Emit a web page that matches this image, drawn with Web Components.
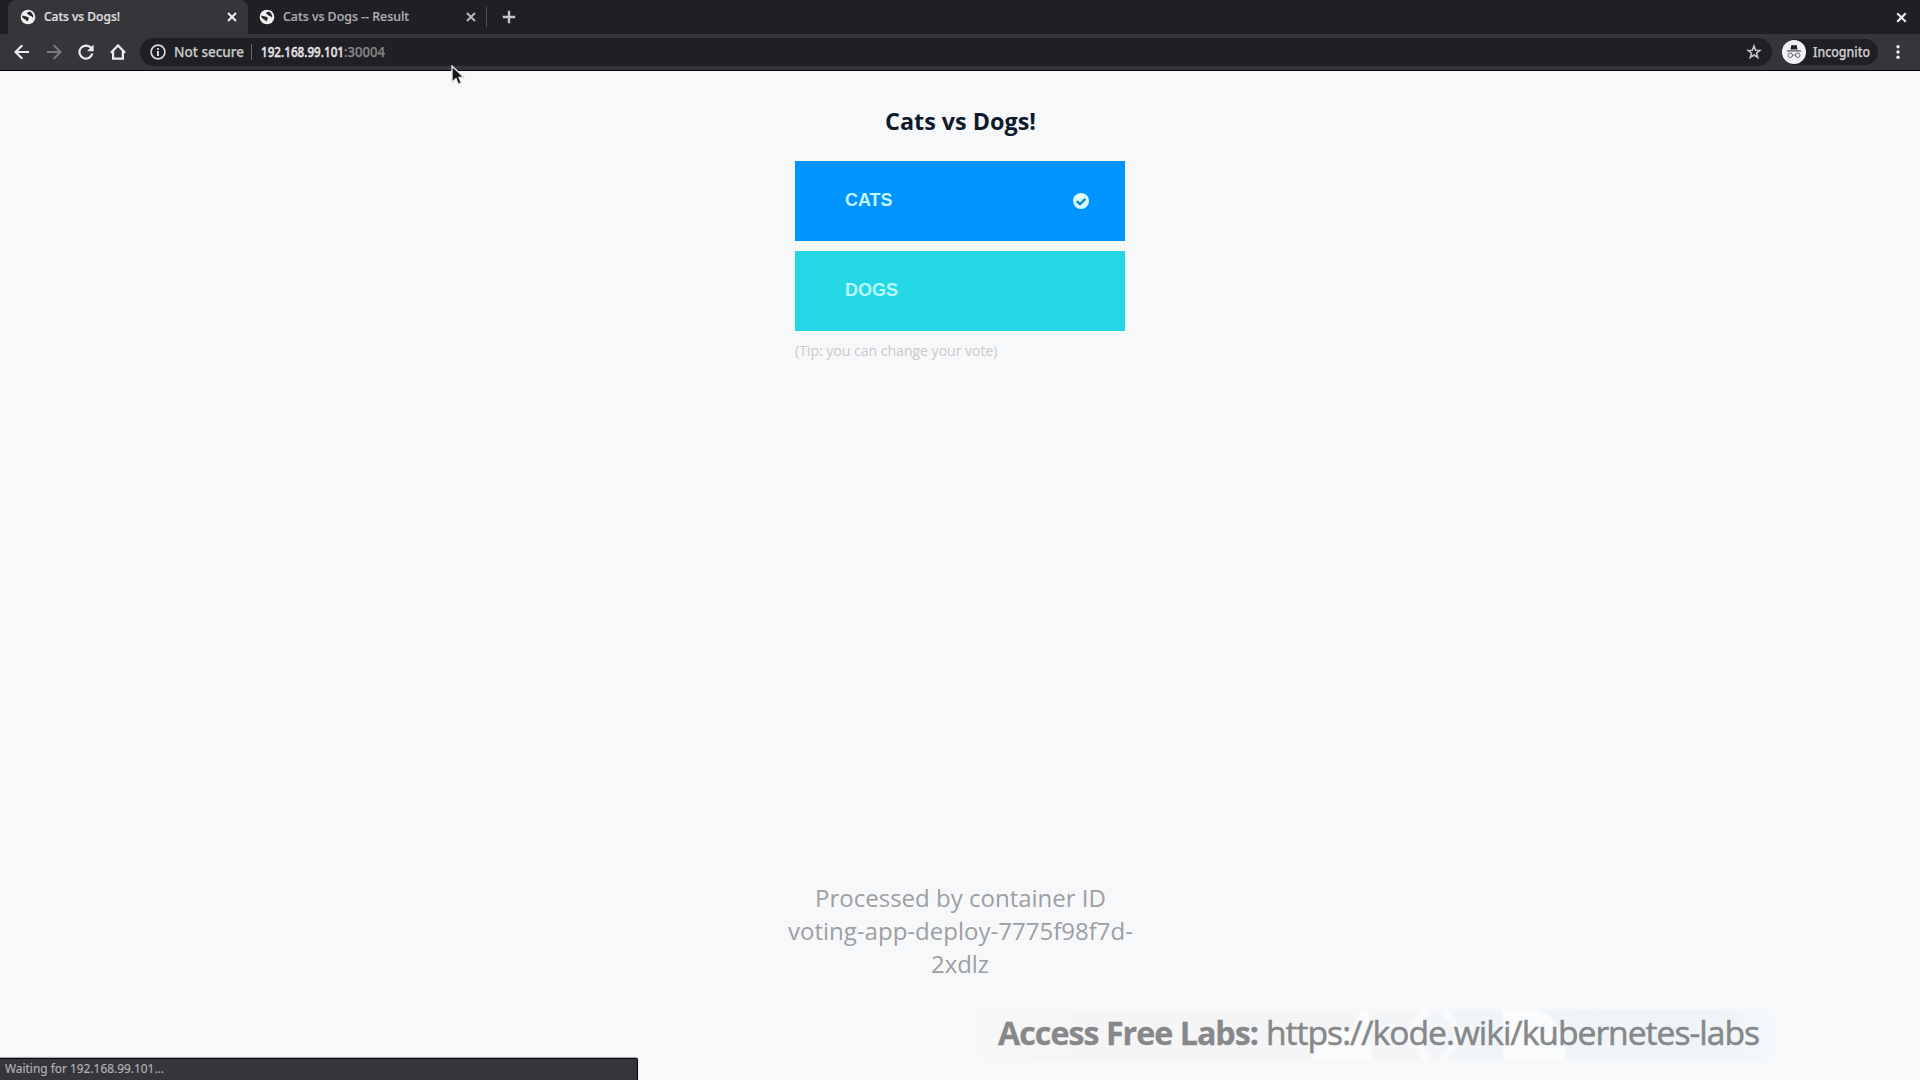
<!DOCTYPE html>
<html lang="en">
<head>
<meta charset="utf-8">
<title>Cats vs Dogs!</title>
<style>
html,body{margin:0;height:100%;overflow:hidden;background:#f6f8fa}
body{font-family:"Open Sans","Noto Sans",sans-serif}
</style>
</head>
<body>
<browser-window></browser-window>
<script>
const define=(name,html,ready)=>customElements.define(name,class extends HTMLElement{
  connectedCallback(){
    if(this.shadowRoot)return;
    const t=document.createElement('template');
    t.innerHTML=html;
    this.attachShadow({mode:'open'}).append(t.content.cloneNode(true));
    if(ready)ready.call(this,this.shadowRoot);
  }
});

/* Single line of text set to a given width in pixels. */
define('fit-text',`<style>:host{display:block;flex:none;white-space:nowrap}span{display:inline-block;transform-origin:0 50%}</style><span><slot></slot></span>`,function(r){
  const w=+this.getAttribute('w'),s=r.querySelector('span');
  const n=s.getBoundingClientRect().width;
  this.style.width=w+'px';
  if(n)s.style.transform='scaleX('+w/n+')';
});

const icons={
  globe:`<circle cx="8" cy="8" r="7.3" fill="#f0f0f1"/><path d="M1.8 6.4 Q4 6.8 6.4 7.6 Q8.8 8.2 8.8 9.6 Q8.6 11.4 7 12.6 Q6.4 10.6 4.6 10.2 Q2.4 9 1.8 6.4Z" fill="#27262a"/><path d="M9.4 2.6 Q7 3.4 6.8 4.8 Q8.8 5.4 9.8 6.8 Q11.8 7 12.8 8.8 Q14 6.6 12 4.2 Q10.6 2.8 9.4 2.6Z" fill="#27262a"/>`,
  close:`<path d="M4 4 12 12M12 4 4 12" stroke="currentColor" stroke-width="2" fill="none"/>`,
  plus:`<path d="M8 1.8V14.2M1.8 8H14.2" stroke="currentColor" stroke-width="2.3" fill="none"/>`,
  back:`<path d="M15 8H1.8M8.3 1.2 1.5 8l6.8 6.8" stroke="currentColor" stroke-width="2.1" fill="none"/>`,
  forward:`<path d="M1 8h13.2M7.7 1.2 14.5 8l-6.8 6.8" stroke="currentColor" stroke-width="1.9" fill="none"/>`,
  reload:`<path d="M13.2 4.2A6.5 6.5 0 1 0 14.3 9.6" stroke="currentColor" stroke-width="2.2" fill="none"/><path d="M15.6.6V7.2H9Z" fill="currentColor"/>`,
  home:`<path d="M.9 8.7 8 1.4l7.1 7.3M3.1 7v7.7h9.8V7" stroke="currentColor" stroke-width="2.2" fill="none"/>`,
  info:`<circle cx="8" cy="8" r="6.9" stroke="currentColor" stroke-width="1.7" fill="none"/><path d="M8 6.9v5M8 3.9v1.8" stroke="currentColor" stroke-width="2"/>`,
  star:`<path d="M8 2 9.6 6.2l4.3.2-3.4 2.8 1.2 4.2L8 11l-3.7 2.4 1.2-4.2-3.4-2.8 4.3-.2Z" stroke="currentColor" stroke-width="1.6" fill="none"/>`,
  dots:`<circle cx="8" cy="2.8" r="1.7" fill="currentColor"/><circle cx="8" cy="8" r="1.7" fill="currentColor"/><circle cx="8" cy="13.2" r="1.7" fill="currentColor"/>`,
  spy:`<circle cx="8" cy="8" r="8" fill="#f1f2f5"/><path d="M5.6 6.3 6.2 3.6q.2-.5.7-.3L8 3.6l1.1-.3q.5-.2.7.3l.6 2.7Z" fill="#202024"/><path d="M3.3 7.3h9.4" stroke="#37373b" stroke-width=".7"/><rect x="4.1" y="8.8" width="2.8" height="2.8" rx="1" fill="none" stroke="#55565a" stroke-width=".6"/><rect x="9.1" y="8.8" width="2.8" height="2.8" rx="1" fill="none" stroke="#55565a" stroke-width=".6"/><path d="M6.9 10h2.2" stroke="#55565a" stroke-width=".6"/>`,
  check:`<circle cx="8" cy="8" r="8" fill="#d8fbff"/><path d="M3.8 8.2 7 11.2 12.3 5.9" stroke="#1583c4" stroke-width="2.3" fill="none"/>`
};
define('ui-icon',`<style>:host{display:block;flex:none;width:16px;height:16px}svg{display:block;width:100%;height:100%}</style><svg viewBox="0 0 16 16"></svg>`,function(r){
  r.querySelector('svg').innerHTML=icons[this.getAttribute('name')];
});

define('browser-tab',`<style>
:host{display:flex;align-items:center;box-sizing:border-box;height:34px;width:240px;padding:0 8px 0 12px;color:#aeaeb1;font:500 13px/18px "Noto Sans",sans-serif;-webkit-text-stroke:.2px}
:host([active]){background:#36353a;color:#e0e0e2;border-radius:8px 8px 0 0}
.label{flex:1;padding:0 0 2px 8px}
ui-icon.x{width:16px;height:16px;color:#b9b9bc}
:host([active]) .x{color:#f0f0f0}
</style><ui-icon name="globe"></ui-icon><div class="label"><slot></slot></div><ui-icon class="x" name="close"></ui-icon>`);

define('tab-strip',`<style>
:host{display:flex;align-items:center;height:34px;background:#202024;padding:0 10px 0 8px}
i{width:1px;height:20px;background:#505054;margin-right:14px}
ui-icon{color:#c6c6c8}
.end{margin-left:auto;color:#f2f2f2;width:17px;height:17px}
</style>
<browser-tab active><fit-text w="76">Cats vs Dogs!</fit-text></browser-tab>
<browser-tab style="margin-left:-1px;margin-right:-1px"><fit-text w="126">Cats vs Dogs -- Result</fit-text></browser-tab>
<i></i><ui-icon name="plus"></ui-icon><ui-icon class="end" name="close"></ui-icon>`);

define('tool-bar',`<style>
:host{display:flex;align-items:center;box-sizing:border-box;height:37px;background:#36353a;border-bottom:1px solid #050507;padding:0 14px 0 14px;color:#ececee;font:500 14px/20px "Noto Sans",sans-serif;-webkit-text-stroke:.25px}
.nav{display:flex;gap:16px}
.field{flex:1;display:flex;align-items:center;box-sizing:border-box;height:28px;border-radius:14px;background:#202024;margin-left:14px;padding:0 10px}
.sep{width:1px;height:16px;background:#68686c;margin:0 9px 0 7px}
.host{color:#e6e6e8;-webkit-text-stroke:.45px}.port{color:#87878b}
.grow{flex:1}
.chip{display:flex;align-items:center;gap:7px;box-sizing:border-box;width:96px;height:26px;border-radius:13px;background:#202024;margin:0 12px 0 10px}
.chip ui-icon{width:24px;height:24px}
</style>
<div class="nav"><ui-icon name="back"></ui-icon><ui-icon name="forward" style="color:#7c7c80"></ui-icon><ui-icon name="reload"></ui-icon><ui-icon name="home"></ui-icon></div>
<div class="field"><ui-icon name="info" style="color:#d8d8da"></ui-icon><fit-text w="70" style="margin-left:8px;color:#c9c9cb">Not secure</fit-text><span class="sep"></span><fit-text class="host" w="83">192.168.99.101</fit-text><fit-text class="port" w="41">:30004</fit-text><span class="grow"></span><ui-icon name="star" style="color:#c4c4c7"></ui-icon></div>
<div class="chip"><ui-icon name="spy"></ui-icon><fit-text w="57" style="color:#cfcfd2">Incognito</fit-text></div>
<ui-icon name="dots"></ui-icon>`);

define('vote-button',`<style>
:host{display:block}
button{display:flex;align-items:center;justify-content:space-between;box-sizing:border-box;width:330px;height:80px;padding:0 36px 0 50px;border:0;border-radius:0;background:var(--fill);color:var(--ink);font:bold 18px/22px "Liberation Sans",Arial,sans-serif}
</style><button type="button"><slot></slot></button>`);

define('vote-page',`<style>
:host{display:flex;flex-direction:column;align-items:center;box-sizing:border-box;height:1009px;padding-top:33px;background:#f6f8fa}
h1{margin:0 0 24px;font:bold 24px/33px "Open Sans",sans-serif;color:#0f1a2c}
.choices{display:flex;flex-direction:column;gap:10px}
.tip{width:330px;margin-top:10px;font-size:14px;line-height:20px;color:#c8cacc}
.who{margin-top:auto;height:199px;display:flex;flex-direction:column;align-items:center;font-size:24px;line-height:33px;color:#9da0a3}
</style>
<h1><fit-text w="151">Cats vs Dogs!</fit-text></h1>
<div class="choices">
<vote-button style="--fill:#0094ff;--ink:#c5f5ff"><fit-text w="47.5" style="margin-top:-3px">CATS</fit-text><ui-icon name="check"></ui-icon></vote-button>
<vote-button style="--fill:#24d7e5;--ink:#b9fbff"><fit-text w="53" style="margin-top:-3px">DOGS</fit-text></vote-button>
</div>
<div class="tip"><fit-text w="202.5">(Tip: you can change your vote)</fit-text></div>
<div class="who"><fit-text w="291">Processed by container ID</fit-text><fit-text w="345">voting-app-deploy-7775f98f7d-</fit-text><fit-text w="58">2xdlz</fit-text></div>`);

define('labs-banner',`<style>
:host{position:absolute;left:975px;top:1010px;width:798px;height:50px;border-radius:10px;background:linear-gradient(90deg,#f6f7f8,#f5f5f6 15%,#f4f5f7 50%,#f0f5f8 72%,#eef4f8 92%,#f5f8fa)}
.art{position:absolute;inset:0;width:798px;height:50px}
.row{position:relative;display:flex;gap:8px;padding-left:23px;font-size:33px;line-height:45px;letter-spacing:-1px;color:#868889}
b{font-weight:700;-webkit-text-stroke:.3px}
.url{font-weight:500;-webkit-text-stroke:.5px}
</style>
<svg class="art" viewBox="0 0 798 50"><path d="M336 50 353 20 378 18 386 0h8V30L398 50ZM528 0h35q24 8 28 50H528Z" fill="#f9fbfc"/><path d="M452 0 433 25 453 50M469 0 487 25 467 50" fill="none" stroke="#f8fafb" stroke-width="8"/></svg>
<div class="row"><b><fit-text w="260">Access Free Labs:</fit-text></b><fit-text class="url" w="493">https://kode.wiki/kubernetes-labs</fit-text></div>`);

define('status-bubble',`<style>
:host{position:absolute;left:0;bottom:0;display:block;box-sizing:border-box;width:638px;height:22px;border-top:1px solid #08080a;border-right:1px solid #08080a;background:#36353a;box-shadow:0 -1px 1px #aaa;border-radius:0 2px 0 0;padding-left:5px;font:13px/18px "Noto Sans",sans-serif;-webkit-text-stroke:.2px;color:#b0b0b3}
</style><fit-text w="159">Waiting for 192.168.99.101...</fit-text>`);

define('mouse-pointer',`<style>:host{position:absolute;left:451px;top:65px;display:block}svg{display:block}</style>
<svg width="16" height="22" viewBox="0 0 16 22"><path d="M1 1V17L5 13.6 7.3 19.2 10.4 17.8 8 12.5H13Z" fill="#17171a" stroke="#e4e4e6" stroke-width="1.4"/></svg>`);

define('browser-window',`<style>:host{display:flex;flex-direction:column;position:relative;width:1920px;height:1080px;overflow:hidden}</style>
<tab-strip></tab-strip><tool-bar></tool-bar><vote-page></vote-page><labs-banner></labs-banner><status-bubble></status-bubble><mouse-pointer></mouse-pointer>`);
</script>
</body>
</html>
